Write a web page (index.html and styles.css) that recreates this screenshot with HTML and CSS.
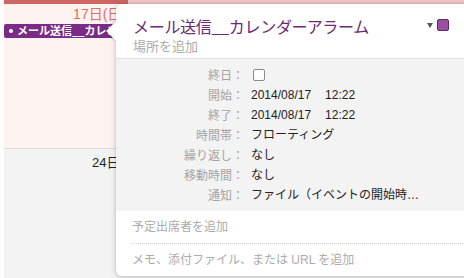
FILE: index.html
```html
<!DOCTYPE html>
<html lang="ja">
<head>
    <meta charset="UTF-8">
    <title>カレンダー</title>
    <link rel="stylesheet" href="styles.css">
</head>
<body>
    <div class="calendar">
        <div class="topbar"><div class="topbar-today"></div></div>

        <!-- 今週 -->
        <div class="week this-week">
            <div class="day today">
                <div class="day-num">17日(日)</div>
                <div class="event"><span class="dot"></span><span class="event-title">メール送信__カレンダーアラーム</span></div>
            </div>
        </div>

        <!-- 来週 -->
        <div class="week next-week">
            <div class="day">
                <div class="day-num">24日(日)</div>
            </div>
        </div>
    </div>

    <div class="popover">
        <div class="pop-header">
            <div class="pop-title-block">
                <div class="pop-title">メール送信__カレンダーアラーム</div>
                <div class="pop-location">場所を追加</div>
            </div>
            <div class="pop-controls">
                <span class="caret"></span>
                <span class="color-box"></span>
            </div>
        </div>

        <div class="pop-details">
            <div class="row"><span class="label">終日：</span><span class="value"><span class="checkbox"></span></span></div>
            <div class="row"><span class="label">開始：</span><span class="value">2014/08/17<span class="time">12:22</span></span></div>
            <div class="row"><span class="label">終了：</span><span class="value">2014/08/17<span class="time">12:22</span></span></div>
            <div class="row"><span class="label">時間帯：</span><span class="value">フローティング</span></div>
            <div class="row"><span class="label">繰り返し：</span><span class="value">なし</span></div>
            <div class="row"><span class="label">移動時間：</span><span class="value">なし</span></div>
            <div class="row"><span class="label">通知：</span><span class="value">ファイル（イベントの開始時…</span></div>
        </div>

        <div class="pop-footer">
            <div class="footer-item invitees">予定出席者を追加</div>
            <div class="footer-item">メモ、添付ファイル、または URL を追加</div>
        </div>
    </div>
</body>
</html>
```

FILE: styles.css
```css
:root {
    --purple: #7a2b85;
    --label-color: #a3a3a3;
    --muted: #ababab;
    --dark: #222;
}

body {
    margin: 0;
    width: 464px;
    height: 278px;
    overflow: hidden;
    font-family: "Liberation Sans", "Noto Sans CJK JP", sans-serif;
    background-color: #fdfdfd;
    position: relative;
}

/* カレンダー本体 */
.calendar {
    padding-left: 4px;
}

.topbar {
    height: 4px;
    background-color: #f2c6c6;
}

.topbar-today {
    width: 124px;
    height: 4px;
    background-color: #cf6464;
}

.week {
    display: flex;
}

.this-week {
    height: 144px;
    border-bottom: 1px solid #dcdcdc;
}

.next-week {
    height: 130px;
    background-color: #f3f3f3;
}

.day {
    width: 130px;
    box-sizing: border-box;
}

.today {
    background-color: #fff3f2;
}

.day-num {
    text-align: right;
    padding-right: 8px;
    font-size: 14px;
    height: 20px;
    line-height: 20px;
    color: #df6f5e;
    white-space: nowrap;
}

.next-week .day-num {
    text-align: left;
    color: #222;
    font-size: 13px;
    padding-top: 4px;
    padding-left: 88px;
}

.event {
    display: flex;
    align-items: flex-start;
    height: 14px;
    background-color: var(--purple);
    color: white;
    white-space: nowrap;
    border-radius: 2px;
}

.event-title {
    font-family: "Noto Sans CJK JP", sans-serif;
    font-size: 11px;
    line-height: 12px;
    font-weight: bold;
}

.dot {
    width: 4px;
    height: 4px;
    border-radius: 50%;
    background-color: white;
    margin: 5px 4px 0 5px;
    flex-shrink: 0;
}

/* ポップオーバー */
.popover {
    position: absolute;
    left: 116px;
    top: 4px;
    width: 360px;
    height: 272px;
    background-color: white;
    border-radius: 6px;
    box-shadow: 0 0 3px rgba(0,0,0,0.22), 0 2px 8px rgba(0,0,0,0.12);
}

.popover::before {
    content: "";
    position: absolute;
    left: -7px;
    top: 20px;
    width: 14px;
    height: 14px;
    background-color: white;
    transform: rotate(45deg);
    box-shadow: -1px 1px 2px rgba(0,0,0,0.2);
}

.pop-header {
    position: relative;
    display: flex;
    justify-content: space-between;
    height: 55px;
    box-sizing: border-box;
    padding: 11px 27px 0 17px;
    border-bottom: 1px solid #dedede;
    background-color: white;
    border-radius: 6px 6px 0 0;
}

.pop-title {
    font-family: "Noto Sans CJK JP", sans-serif;
    font-size: 16px;
    line-height: 22px;
    color: #6a2a78;
    letter-spacing: -0.3px;
}

.pop-location {
    font-family: "Noto Sans CJK JP", sans-serif;
    font-size: 13px;
    line-height: 18px;
    color: var(--muted);
}

.pop-controls {
    display: flex;
    align-items: center;
    height: 14px;
    margin-top: 3px;
    gap: 4px;
}

.caret {
    width: 0;
    height: 0;
    border-left: 3px solid transparent;
    border-right: 3px solid transparent;
    border-top: 5px solid #555;
}

.color-box {
    width: 10px;
    height: 10px;
    border: 1px solid #5e2766;
    border-radius: 2px;
    background-color: #9b4fa1;
}

.pop-details {
    background-color: #f3f3f3;
    height: 152px;
    box-sizing: border-box;
    padding-top: 6px;
}

.row {
    display: grid;
    grid-template-columns: 128px 1fr;
    column-gap: 7px;
    height: 20px;
    line-height: 20px;
    font-size: 12px;
}

.label {
    text-align: right;
    color: var(--label-color);
    font-family: "Noto Sans CJK JP", sans-serif;
}

.value {
    color: var(--dark);
    display: flex;
    align-items: center;
}

.time {
    margin-left: 14px;
}

.checkbox {
    width: 10px;
    height: 10px;
    border: 1px solid #8a8a8a;
    border-radius: 2px;
    background-color: white;
    margin-left: 2px;
}

.pop-footer {
    padding: 0 11px 0 16px;
}

.footer-item {
    height: 32px;
    line-height: 32px;
    font-size: 12px;
    color: var(--muted);
}

.invitees {
    border-bottom: 1px dotted #cfcfcf;
}
```
